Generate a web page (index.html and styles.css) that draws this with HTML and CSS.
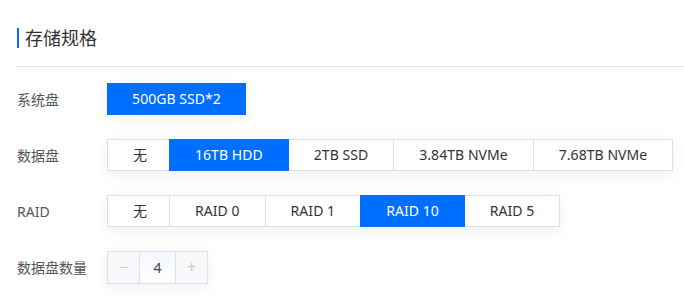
FILE: index.html
```html
<!DOCTYPE html>
<html lang="zh-CN">
<head>
    <meta charset="UTF-8">
    <meta name="viewport" content="width=device-width, initial-scale=1.0">
    <title>存储规格</title>
    <link rel="stylesheet" href="styles.css">
</head>
<body>
    <div class="panel">
        <div class="panel-head">
            <h2 class="panel-title">存储规格</h2>
        </div>

        <div class="form-row">
            <span class="form-label">系统盘</span>
            <div class="seg-group">
                <span class="seg wide active">500GB SSD*2</span>
            </div>
        </div>

        <div class="form-row">
            <span class="form-label">数据盘</span>
            <div class="seg-group">
                <span class="seg">无</span>
                <span class="seg active">16TB HDD</span>
                <span class="seg">2TB SSD</span>
                <span class="seg">3.84TB NVMe</span>
                <span class="seg">7.68TB NVMe</span>
            </div>
        </div>

        <div class="form-row">
            <span class="form-label">RAID</span>
            <div class="seg-group">
                <span class="seg">无</span>
                <span class="seg">RAID 0</span>
                <span class="seg">RAID 1</span>
                <span class="seg active">RAID 10</span>
                <span class="seg">RAID 5</span>
            </div>
        </div>

        <div class="form-row">
            <span class="form-label">数据盘数量</span>
            <div class="stepper">
                <span class="step-btn">&minus;</span>
                <span class="step-value">4</span>
                <span class="step-btn">+</span>
            </div>
        </div>
    </div>
</body>
</html>
```

FILE: styles.css
```css
* {
    margin: 0;
    padding: 0;
    box-sizing: border-box;
    font-family: "Noto Sans", "Noto Sans CJK SC", sans-serif;
}

body {
    background: #fff;
    color: #333;
}

.panel {
    padding: 28px 0 0 17px;
}

.panel-head {
    padding-bottom: 18px;
    border-bottom: 1px solid #e3e3e3;
    margin-bottom: 16px;
}

.panel-title {
    font-size: 18px;
    font-weight: normal;
    color: #333;
    line-height: 20px;
    padding-left: 6px;
    border-left: 2px solid #006eff;
}

.form-row {
    display: flex;
    align-items: center;
    height: 32px;
    margin-bottom: 24px;
}

.form-label {
    width: 90px;
    font-size: 14px;
    color: #555;
}

.seg-group {
    display: flex;
    box-shadow: 0 4px 14px rgba(30, 50, 90, 0.07);
}

.seg {
    position: relative;
    height: 32px;
    line-height: 30px;
    padding: 0 25px;
    border: 1px solid #dcdfe6;
    margin-left: -1px;
    font-size: 14px;
    letter-spacing: 0.05px;
    color: #333;
    background: #fff;
    white-space: nowrap;
    text-align: center;
}

.seg:first-child {
    margin-left: 0;
    width: 63px;
}

.seg.wide {
    width: 139px;
    padding: 0;
}

.seg.active {
    background: #006eff;
    border-color: #006eff;
    color: #fff;
    z-index: 1;
}

.stepper {
    display: flex;
    height: 33px;
    border: 1px solid #dcdfe6;
    box-shadow: 0 4px 14px rgba(30, 50, 90, 0.07);
}

.step-btn {
    width: 31px;
    line-height: 31px;
    text-align: center;
    font-size: 16px;
    color: #c8ccd4;
    background: #f7f8fa;
}

.step-value {
    width: 37px;
    line-height: 31px;
    text-align: center;
    font-size: 14px;
    color: #444;
    border-left: 1px solid #dcdfe6;
    border-right: 1px solid #dcdfe6;
    background: linear-gradient(#f3f8ff, #fff);
}
```
